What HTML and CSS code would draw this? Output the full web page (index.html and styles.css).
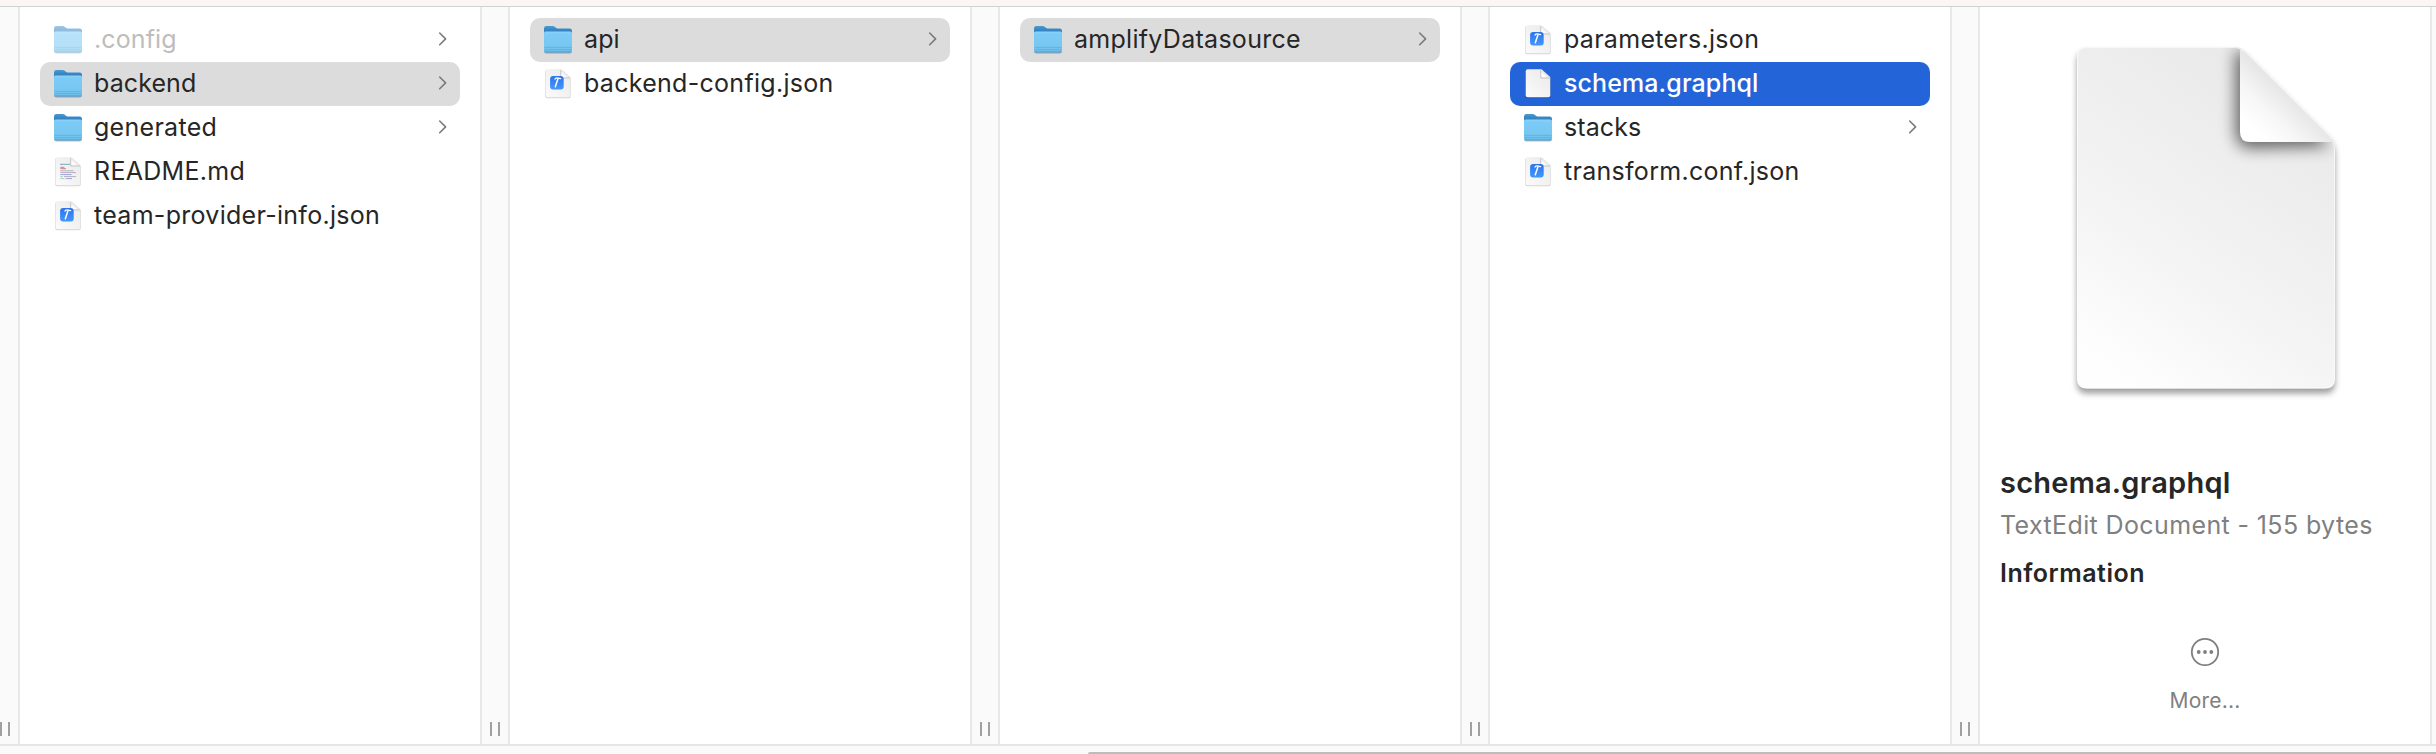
FILE: index.html
```html
<!DOCTYPE html>
<html lang="en">
<head>
<meta charset="utf-8">
<title>Files</title>
<link rel="stylesheet" href="styles.css">
</head>
<body>
<svg class="defs" width="0" height="0" aria-hidden="true">
  <defs>
    <linearGradient id="folderBack" x1="0" y1="0" x2="0" y2="1"><stop offset="0" stop-color="#4a9bd0"/><stop offset=".25" stop-color="#3583c0"/><stop offset="1" stop-color="#3d8bc4"/></linearGradient>
    <linearGradient id="folderFront" x1="0" y1="0" x2="0" y2="1"><stop offset="0" stop-color="#8bd4fa"/><stop offset=".12" stop-color="#7ccbf6"/><stop offset=".8" stop-color="#76c6f2"/><stop offset="1" stop-color="#68b8e6"/></linearGradient>
    <linearGradient id="paper" x1="1" y1="0" x2="0" y2="1"><stop offset="0" stop-color="#e9e9e9"/><stop offset="1" stop-color="#fbfbfb"/></linearGradient>
    <linearGradient id="fold" x1="1" y1="0" x2="0" y2="1"><stop offset=".45" stop-color="#dcdcdc"/><stop offset=".8" stop-color="#fff"/></linearGradient>
    <linearGradient id="hammerTile" x1="0" y1="0" x2="0" y2="1"><stop offset="0" stop-color="#2a74ef"/><stop offset="1" stop-color="#4297fb"/></linearGradient>
    <symbol id="folder" viewBox="0 0 32 32">
      <rect x="2.2" y="9" width="27.6" height="21.5" rx="2" fill="#000" opacity=".28"/>
      <path d="M2 5.4Q2 3 4.4 3H10.6Q12 3 13 3.9L14.3 5Q15.2 5.6 16.4 5.6H27.6Q30 5.6 30 8V20H2Z" fill="url(#folderBack)"/>
      <path d="M2 10.2Q2 8.6 3.6 8.6H28.4Q30 8.6 30 10.2V27.2Q30 29.4 27.8 29.4H4.2Q2 29.4 2 27.2Z" fill="url(#folderFront)"/>
      <path d="M2.6 24.4H29.4M2.6 26.4H29.4" stroke="#559fce" stroke-width=".7" opacity=".75"/>
      <path d="M2.6 28.9H29.4" stroke="#4c9ccf" stroke-width=".8"/>
    </symbol>
    <symbol id="page" viewBox="0 0 32 32">
      <g transform="translate(0 .7)">
        <path d="M3.2 4Q3.2 2 5.2 2H19L28.8 10.4V28.2Q28.8 30.6 26.6 30.6H5.4Q3.2 30.6 3.2 28.2Z" fill="#000" opacity=".17"/>
        <path d="M3.7 3.5Q3.7 1.5 5.7 1.5H19.4L28.3 9.5V27.6Q28.3 29.6 26.3 29.6H5.7Q3.7 29.6 3.7 27.6Z" fill="url(#paper)"/>
        <path d="M18.8 2.5V9.3Q18.8 10.2 19.6 10.2H28" fill="none" stroke="#888" stroke-width="1.4" opacity=".35"/>
        <path d="M19.4 1.5L28.3 9.5H20.6Q19.4 9.5 19.4 8.3Z" fill="url(#fold)"/>
      </g>
    </symbol>
    <symbol id="json" viewBox="0 0 32 32">
      <use href="#page" width="32" height="32"/>
      <g transform="translate(0 .6)">
        <rect x="8.1" y="8.4" width="13.6" height="13.4" rx="3" fill="url(#hammerTile)"/>
        <path d="M15.9 11.4L13.3 19.2" stroke="#fff" stroke-width="1.5" stroke-linecap="round"/>
        <path d="M12.9 11.5Q14 10 16.2 10.5L18.6 11.1" fill="none" stroke="#fff" stroke-width="1.2" stroke-linecap="round"/>
      </g>
    </symbol>
    <symbol id="readme" viewBox="0 0 32 32">
      <use href="#page" width="32" height="32"/>
      <g fill="none" stroke-width="1" opacity=".75">
        <path d="M8.3 9.3H10" stroke="#6b4fc0"/><path d="M10 9.3H18" stroke="#3fa69a"/>
        <path d="M8.3 12.3H12.4M8.3 13.7H14" stroke="#d2457c"/>
        <path d="M8.3 15.8H21.5M8.3 17.6H24M12 21.6H24" stroke="#9b9ba5"/>
        <path d="M8.3 19.6H19.5M13.8 23.6H20" stroke="#8482d8"/>
        <path d="M8.3 21.6H11M8.3 23.6H12.5" stroke="#8fc0b0"/>
      </g>
    </symbol>
    <symbol id="chevron" viewBox="0 0 10 16">
      <path d="M1.7 2L7.6 7.9L1.7 13.8" fill="none" stroke="#7b7b7b" stroke-width="1.6" stroke-linecap="round" stroke-linejoin="round"/>
    </symbol>
  </defs>
</svg>
<div class="browser">
  <div class="topbar"></div>
  <main class="columns">
    <div class="gutter gutter-first"><i class="grip"></i></div>
    <section class="column">
      <div class="row hidden-file"><svg class="icon"><use href="#folder"/></svg><span class="name short">.config</span><svg class="chevron"><use href="#chevron"/></svg></div>
      <div class="row open"><svg class="icon"><use href="#folder"/></svg><span class="name short">backend</span><svg class="chevron"><use href="#chevron"/></svg></div>
      <div class="row"><svg class="icon"><use href="#folder"/></svg><span class="name">generated</span><svg class="chevron"><use href="#chevron"/></svg></div>
      <div class="row"><svg class="icon"><use href="#readme"/></svg><span class="name">README.md</span></div>
      <div class="row"><svg class="icon"><use href="#json"/></svg><span class="name">team-provider-info.json</span></div>
    </section>
    <div class="gutter"><i class="grip"></i></div>
    <section class="column">
      <div class="row open"><svg class="icon"><use href="#folder"/></svg><span class="name short">api</span><svg class="chevron"><use href="#chevron"/></svg></div>
      <div class="row"><svg class="icon"><use href="#json"/></svg><span class="name">backend-config.json</span></div>
    </section>
    <div class="gutter"><i class="grip"></i></div>
    <section class="column">
      <div class="row open"><svg class="icon"><use href="#folder"/></svg><span class="name">amplifyDatasource</span><svg class="chevron"><use href="#chevron"/></svg></div>
    </section>
    <div class="gutter"><i class="grip"></i></div>
    <section class="column">
      <div class="row"><svg class="icon"><use href="#json"/></svg><span class="name">parameters.json</span></div>
      <div class="row selected"><svg class="icon"><use href="#page"/></svg><span class="name short">schema.graphql</span></div>
      <div class="row"><svg class="icon"><use href="#folder"/></svg><span class="name short">stacks</span><svg class="chevron"><use href="#chevron"/></svg></div>
      <div class="row"><svg class="icon"><use href="#json"/></svg><span class="name">transform.conf.json</span></div>
    </section>
    <div class="gutter"><i class="grip"></i></div>
    <section class="preview">
      <svg class="document" viewBox="0 0 340 400">
        <defs>
          <linearGradient id="docFill" gradientUnits="userSpaceOnUse" x1="250" y1="90" x2="70" y2="350"><stop offset="0" stop-color="#eaeaea"/><stop offset=".6" stop-color="#f4f4f4"/><stop offset="1" stop-color="#fefefe"/></linearGradient>
          <linearGradient id="curl" gradientUnits="userSpaceOnUse" x1="248" y1="75" x2="215" y2="110"><stop offset="0" stop-color="#e6e6e6"/><stop offset=".5" stop-color="#f6f6f6"/><stop offset="1" stop-color="#fff"/></linearGradient>
          <filter id="soft" x="-20%" y="-20%" width="140%" height="140%"><feGaussianBlur stdDeviation="3"/></filter>
          <filter id="curlBlur" x="-50%" y="-50%" width="200%" height="200%"><feGaussianBlur stdDeviation="8"/></filter>
          <path id="sheet" d="M37 37Q37 27 47 27H194Q201 27 206 32L289 115Q295 121 295 130V358.5Q295 368.5 285 368.5H47Q37 368.5 37 358.5Z"/>
          <clipPath id="sheetClip"><use href="#sheet"/></clipPath>
        </defs>
        <use href="#sheet" y="5" fill="#000" opacity=".38" filter="url(#soft)"/>
        <use href="#sheet" fill="url(#docFill)"/>
        <g clip-path="url(#sheetClip)">
          <path d="M196 30V112Q196 126 208 128L290 126L210 34Z" fill="#000" opacity=".6" filter="url(#curlBlur)"/>
          <use href="#sheet" fill="none" stroke="#fff" stroke-opacity=".6" stroke-width="2"/>
        </g>
        <path d="M200 28L206 32L289 115Q292 118 293 122H210Q200 122 200 112Z" fill="url(#curl)"/>
        <path d="M201 29L206 32L289 115L292 119" fill="none" stroke="#f4f4f4" stroke-width="1.6"/>
      </svg>
      <div class="info">
        <h1 class="title">schema.graphql</h1>
        <p class="kind">TextEdit Document - 155 bytes</p>
        <h2 class="heading">Information</h2>
      </div>
      <div class="more">
        <svg class="more-icon" viewBox="0 0 30 30"><circle cx="15" cy="15" r="13.2" fill="none" stroke="#7f7f7f" stroke-width="1.8"/><g fill="#7f7f7f"><circle cx="8.7" cy="15" r="1.9"/><circle cx="15" cy="15" r="1.9"/><circle cx="21.3" cy="15" r="1.9"/></g></svg>
        <span class="more-label">More...</span>
      </div>
    </section>
    <div class="gutter gutter-last"></div>
  </main>
  <footer class="scroller"><div class="thumb"></div></footer>
</div>
</body>
</html>
```
FILE: styles.css
```css
* { box-sizing: border-box; }
body { margin: 0; background: #fff; color: #262626; font-family: Inter, "Liberation Sans", sans-serif; }
.defs { display: block; }
.browser { width: 2436px; height: 754px; display: flex; flex-direction: column; overflow: hidden; }
.topbar { height: 7px; background: #fbf5f4; border-bottom: 1px solid #d0d3d2; flex: none; }
.columns { flex: 1; display: flex; min-height: 0; }
.gutter { flex: none; width: 30px; background: #fafafa; border: solid #e8e8e8; border-width: 0 2px; display: flex; justify-content: center; align-items: flex-end; padding-bottom: 8px; }
.gutter-first { width: 20px; border-left: 0; justify-content: flex-start; }
.gutter-last { width: 6px; border-right: 0; }
.grip { width: 10px; height: 14px; border: solid #a0a0a0; border-width: 0 2px; }
.column { width: 460px; flex: none; padding: 11px 20px; }
.row { height: 44px; display: flex; align-items: center; padding: 0 12px; border-radius: 10px; font-size: 25px; line-height: 42px; }
.icon { width: 32px; height: 32px; flex: none; margin-top: -2px; }
.name { margin-left: 10px; margin-top: -2px; white-space: nowrap; letter-spacing: .29px; }
.name.short { letter-spacing: .1px; }
.chevron { width: 10px; height: 16px; margin-left: auto; margin-top: -2px; }
.open { background: #dcdcdc; }
.selected { background: #2365d9; color: #fff; font-weight: 500; }
.hidden-file .icon { opacity: .55; }
.hidden-file .name { color: #bdbdbd; }
.preview { width: 450px; flex: none; padding: 13px 0 0; }
.document { display: block; width: 340px; height: 400px; margin-left: 60px; }
.info { padding: 44px 0 0 20px; white-space: nowrap; }
.title, .kind, .heading { margin: 0; font-weight: 400; }
.title { font-size: 29px; line-height: 38px; font-weight: 600; letter-spacing: .23px; }
.kind { font-size: 25px; line-height: 32px; color: #808080; margin-top: 7px; letter-spacing: .38px; }
.heading { font-size: 25px; line-height: 32px; font-weight: 600; margin-top: 16px; letter-spacing: .5px; }
.more { display: flex; flex-direction: column; align-items: center; margin-top: 48px; color: #808080; }
.more-icon { width: 30px; height: 30px; }
.more-label { font-size: 21px; line-height: 28px; margin-top: 20px; letter-spacing: .2px; }
.scroller { height: 10px; flex: none; background: #fafafa; border-top: 2px solid #e6e6e6; display: flex; align-items: flex-end; }
.thumb { margin-left: 1088px; height: 2px; flex: 1; background: #bcbcbc; border-top-left-radius: 2px; }
```
